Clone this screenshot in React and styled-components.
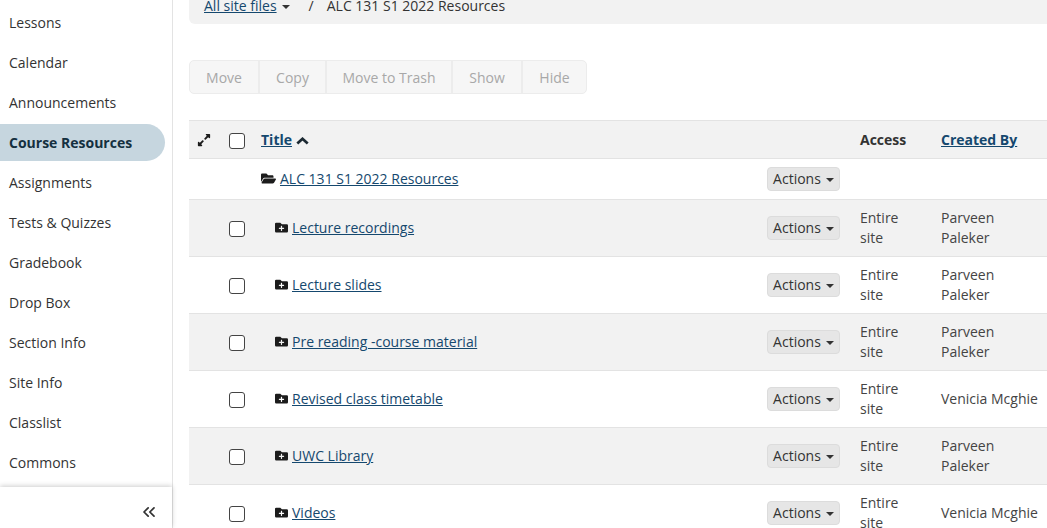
import React from 'react';
import styled, { createGlobalStyle } from 'styled-components';
import { FaExpandAlt, FaFolderOpen, FaFolderPlus } from 'react-icons/fa';
import { ChevronsLeft } from 'lucide-react';

const Global = createGlobalStyle`
html, body { margin:0; padding:0; background:#fff; overflow:hidden; }
body { font-family:"Open Sans", "Liberation Sans", sans-serif; font-size:14px; color:#262626; }
* { box-sizing:border-box; }
`
const Page = styled.div`
display:flex; width:1047px; height:528px; overflow:hidden;
`
const Sidebar = styled.aside`
width:173px; flex:none; display:flex; flex-direction:column;
border-right:1px solid #e3e3e3;
`
const Nav = styled.nav`
flex:1; padding-top:3px;
`
const NavItem = styled.div`
height:40px; display:flex; align-items:center; padding-left:9px;
width:165px; font-size:14px; line-height:20px;
color:${p => (p.$active ? '#14303f' : '#333')};
font-weight:${p => (p.$active ? 700 : 400)};
${p => p.$active && `
    position:relative; z-index:0;
    &::before {
        content:''; position:absolute; z-index:-1; left:0; right:0; top:1px; bottom:2px;
        background:#c6d6df; border-radius:0 19px 19px 0;
    }
`}
`
const Collapse = styled.div`
height:41px; width:172px; display:flex; align-items:center; justify-content:flex-end;
padding:8px 13px 0 0; color:#333;
box-shadow:0 -1px 5px rgba(0,0,0,0.2);
`
const Main = styled.main`
flex:1; min-width:0; padding-left:16px;
`
const Crumbs = styled.div`
height:24px; background:#f2f2f2; border-radius:0 0 0 6px;
display:flex; align-items:center; padding:0 0 0 15px; color:#333;
`
const CrumbText = styled.div`
height:20px; line-height:20px; margin-top:-12px; white-space:nowrap;
`
const CrumbLink = styled.a`
color:#15486e; text-decoration:underline;
`
const Sep = styled.span`
margin:0 13px 0 19px;
`
const Caret = styled.span`
display:inline-block; width:0; height:0; margin-left:5px; vertical-align:middle;
border-left:4px solid transparent; border-right:4px solid transparent;
border-top:4px solid #333;
`
const Toolbar = styled.div`
display:inline-flex; margin-top:36px; height:34px; vertical-align:top;
border:1px solid #ececec; border-radius:5px; background:#f6f6f6; overflow:hidden;
`
const ToolButton = styled.button`
height:100%; border:0; background:none; font:inherit; color:#a8a8a8; padding:0;
width:${p => p.$w}px; border-right:${p => (p.$last ? '0' : '2px solid #ececec')};
`
const Table = styled.div`
margin-top:26px; width:858px;
`
const Row = styled.div`
display:grid; grid-template-columns:30px 42px 506px 93px 81px 1fr; align-items:center;
height:${p => p.$h}px; line-height:20px;
background:${p => (p.$shade ? '#f2f2f2' : '#fff')};
border-bottom:1px solid #e3e3e3;
`
const HeadRow = styled(Row)`
border-top:1px solid #e3e3e3; font-weight:700; color:#333;
`
const HeadLink = styled.a`
color:#15486e; text-decoration:underline; white-space:nowrap;
`
const SortIcon = styled.svg`
width:13px; height:8px; margin-left:4px; vertical-align:0;
`
const ExpandCell = styled.div`
display:flex; padding-left:8px; color:#1c1c1c; font-size:14px;
`
const CheckCell = styled.div`
display:flex; padding:2px 0 0 10px;
`
const Check = styled.span`
display:block; width:16px; height:16px; background:#fff;
border:1px solid #444; border-radius:3px;
`
const TitleCell = styled.div`
display:flex; align-items:center; gap:4px; padding-left:${p => p.$indent}px; color:#1c1c1c;
& > svg { margin-bottom:2px; flex:none; }
`
const ItemLink = styled.a`
color:#15486e; text-decoration:underline;
`
const ActionsButton = styled.button`
width:73px; height:24px; padding:0; border:1px solid #dcdcdc; border-radius:4px;
background:#e6e6e6; font:inherit; color:#333; white-space:nowrap;
`
const Text = styled.div`
color:#444; max-width:${p => p.$max || 'none'};
`

const navItems = ['Lessons', 'Calendar', 'Announcements', 'Course Resources', 'Assignments', 'Tests & Quizzes', 'Gradebook', 'Drop Box', 'Section Info', 'Site Info', 'Classlist', 'Commons'];
const tools = [['Move', 70], ['Copy', 67], ['Move to Trash', 126], ['Show', 70], ['Hide', 63]];
const rows = [
    ['Lecture recordings', 'Parveen Paleker'],
    ['Lecture slides', 'Parveen Paleker'],
    ['Pre reading -course material', 'Parveen Paleker'],
    ['Revised class timetable', 'Venicia Mcghie'],
    ['UWC Library', 'Parveen Paleker'],
    ['Videos', 'Venicia Mcghie'],
];

const Actions = () => (
    <ActionsButton>Actions<Caret /></ActionsButton>
);

const App = () => {
    return (
        <Page>
            <Global />
            <Sidebar>
                <Nav>
                    {navItems.map(name => (
                        <NavItem key={name} $active={name === 'Course Resources'}>{name}</NavItem>
                    ))}
                </Nav>
                <Collapse><ChevronsLeft size={20} strokeWidth={2.1} /></Collapse>
            </Sidebar>
            <Main>
                <Crumbs>
                    <CrumbText>
                        <CrumbLink>All site files</CrumbLink><Caret />
                        <Sep>/</Sep>
                        ALC 131 S1 2022 Resources
                    </CrumbText>
                </Crumbs>
                <Toolbar>
                    {tools.map(([name, w], i) => (
                        <ToolButton key={name} $w={w} $last={i === tools.length - 1}>{name}</ToolButton>
                    ))}
                </Toolbar>
                <Table>
                    <HeadRow $h={39} $shade>
                        <ExpandCell><FaExpandAlt /></ExpandCell>
                        <CheckCell><Check /></CheckCell>
                        <div>
                            <HeadLink>
                                Title
                                <SortIcon viewBox="0 0 13 8">
                                    <polyline points="1.3,6.6 6.5,1.8 11.7,6.6" fill="none" stroke="#1c2a33" strokeWidth="2.7" />
                                </SortIcon>
                            </HeadLink>
                        </div>
                        <div />
                        <div>Access</div>
                        <div><HeadLink>Created By</HeadLink></div>
                    </HeadRow>
                    <Row $h={41}>
                        <div />
                        <div />
                        <TitleCell $indent={0}><FaFolderOpen size={15} /><ItemLink>ALC 131 S1 2022 Resources</ItemLink></TitleCell>
                        <div><Actions /></div>
                    </Row>
                    {rows.map(([title, owner], i) => (
                        <Row key={title} $h={57} $shade={i % 2 === 0}>
                            <div />
                            <CheckCell><Check /></CheckCell>
                            <TitleCell $indent={14}><FaFolderPlus size={13} /><ItemLink>{title}</ItemLink></TitleCell>
                            <div><Actions /></div>
                            <Text>Entire<br />site</Text>
                            <Text $max="100px">{owner}</Text>
                        </Row>
                    ))}
                </Table>
            </Main>
        </Page>
    );
};

export default App;
